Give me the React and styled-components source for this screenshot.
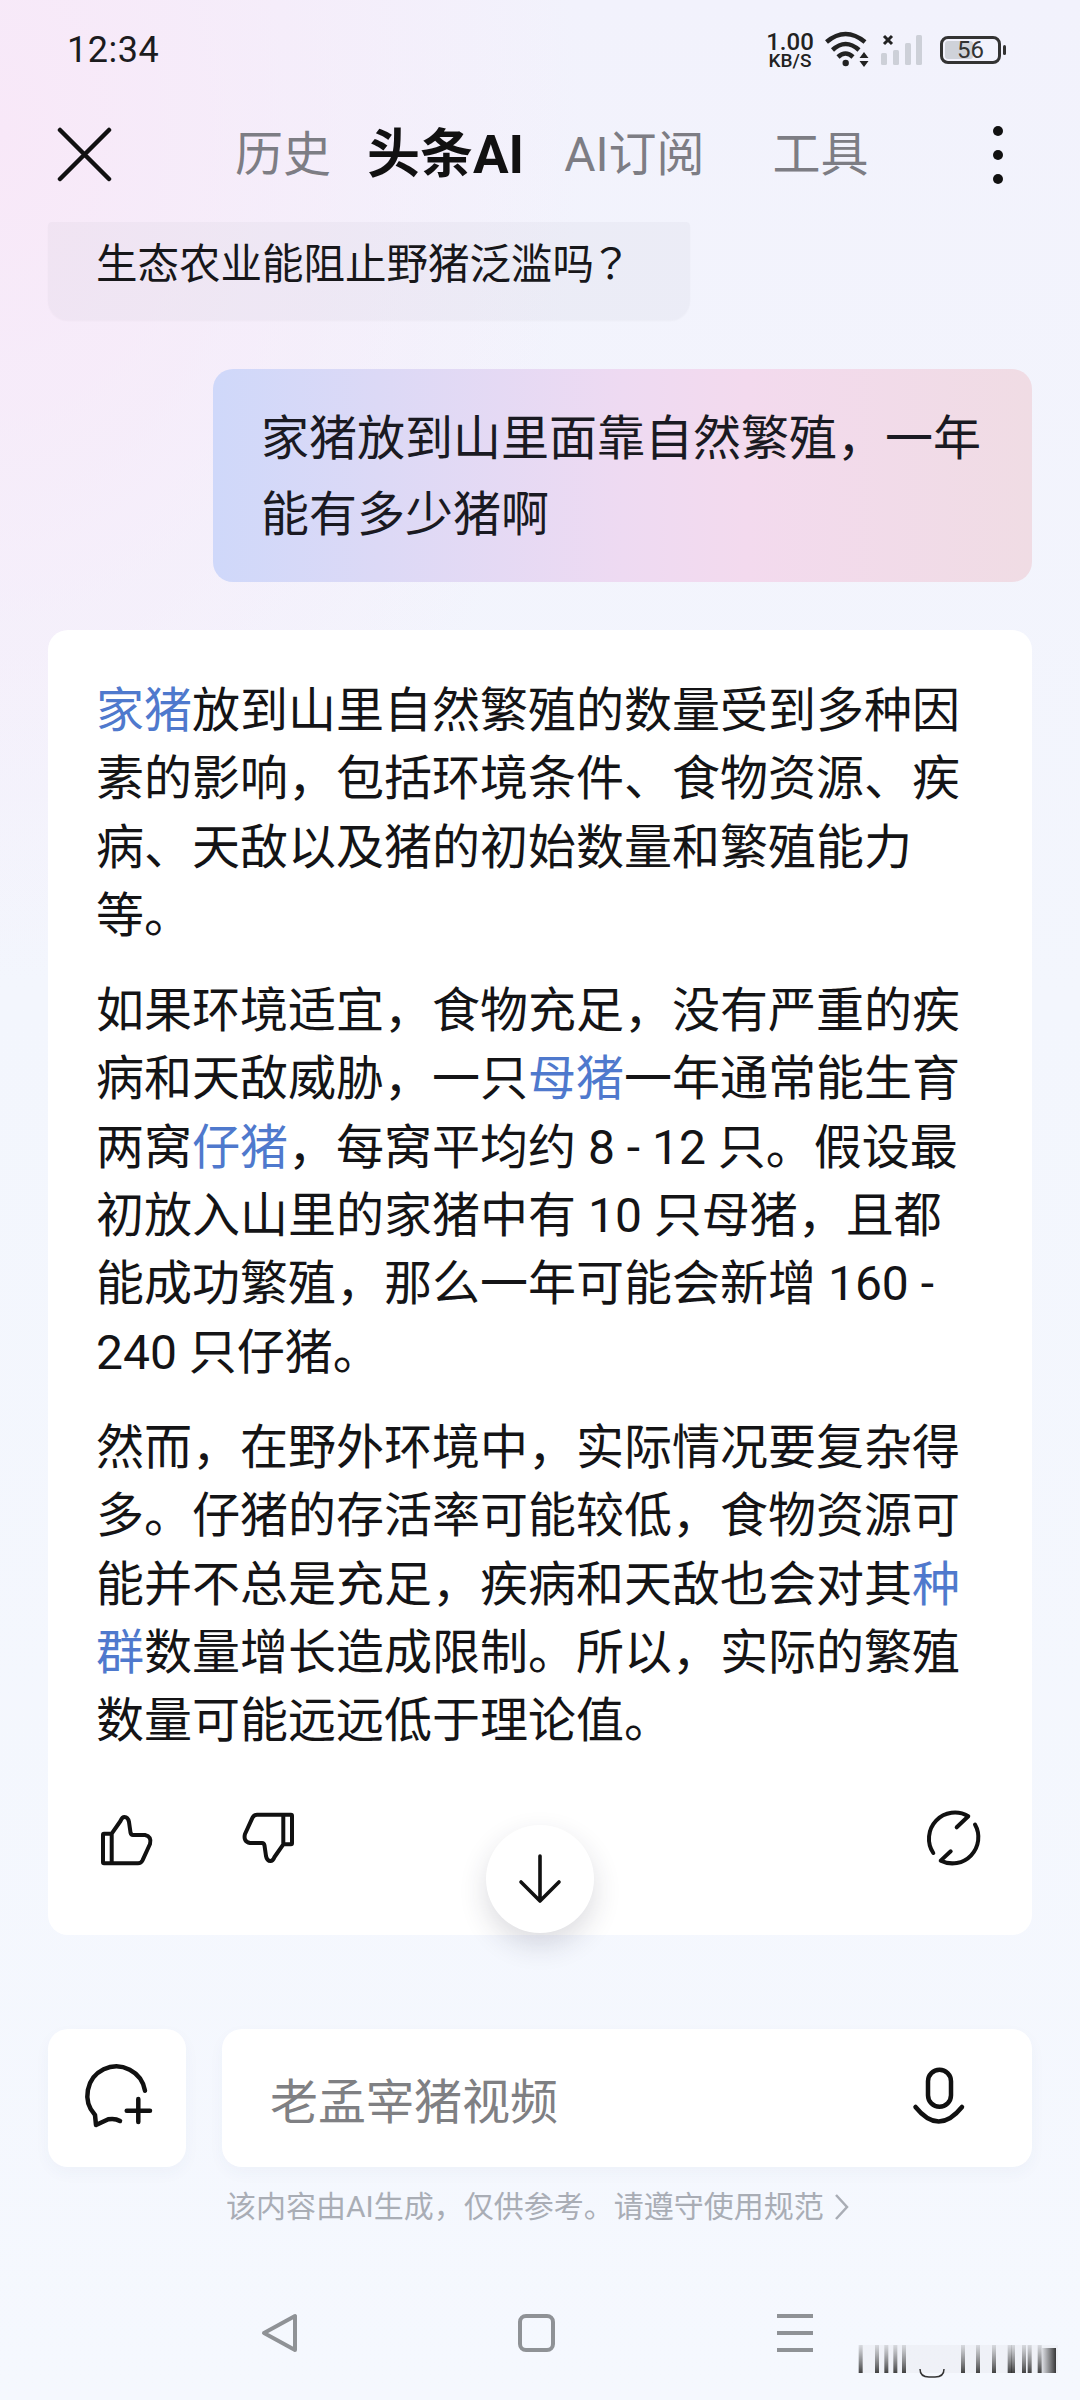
import styled, { createGlobalStyle } from "styled-components";

const GlobalStyle = createGlobalStyle`
	html, body {
		margin: 0;
		padding: 0;
		background: #f5f8fe;
	}
	* {
		box-sizing: border-box;
	}
`;

const Page = styled.div`
	position: relative;
	width: 1080px;
	height: 2400px;
	overflow: hidden;
	display: flex;
	flex-direction: column;
	font-family: Roboto, "Noto Sans CJK SC", sans-serif;
	color: #17171a;
	background: radial-gradient(ellipse 580px 850px at 0 130px, #f8e8f8 0%, rgba(248, 232, 248, 0) 100%),
		linear-gradient(180deg, #f2f2fc 0, #f3f6fd 1000px, #f5f8fe 100%);
`;

const StatusBar = styled.div`
	height: 100px;
	padding: 0 79px 0 67px;
	display: flex;
	align-items: center;
	justify-content: space-between;
`;
const Clock = styled.div`
	font-size: 36px;
	letter-spacing: 0.5px;
	color: #1c1c1e;
`;
const StatusIcons = styled.div`
	display: flex;
	align-items: center;
`;
const NetSpeed = styled.div`
	width: 48px;
	margin-right: 11px;
	display: flex;
	flex-direction: column;
	align-items: center;
	font-weight: 500;
	color: #222;
`;
const NetValue = styled.span`
	font-size: 24px;
	line-height: 20px;
`;
const NetUnit = styled.span`
	font-size: 19px;
	line-height: 17px;
`;
const Battery = styled.div`
	position: relative;
	width: 61px;
	height: 28px;
	margin-left: 11px;
	border: 3px solid #333;
	border-radius: 8px;
	display: flex;
	align-items: center;
	justify-content: center;
	font-size: 24px;
	color: #333;

	&::after {
		content: "";
		position: absolute;
		right: -8px;
		top: 6px;
		width: 3px;
		height: 10px;
		background: #333;
		border-radius: 2px;
	}
`;
const BatteryFill = styled.div`
	position: absolute;
	left: 2px;
	top: 2px;
	bottom: 2px;
	width: ${(p) => p.$level * 0.5}px;
	background: #cfd2d9;
	border-radius: 3px;
`;
const BatteryText = styled.span`
	position: relative;
`;

const Header = styled.div`
	height: 110px;
	padding-left: 56px;
	display: flex;
	align-items: center;
	margin-bottom: 12px;
`;
const Tab = styled.div`
	margin-left: ${(p) => p.$gap}px;
	font-size: ${(p) => (p.$active ? 53 : 48)}px;
	line-height: 60px;
	font-weight: ${(p) => (p.$active ? 700 : 400)};
	color: ${(p) => (p.$active ? "#111" : "#7d7d84")};
	white-space: nowrap;
`;
const MoreDots = styled.div`
	margin-left: 124px;
	display: flex;
	flex-direction: column;
	gap: 14px;
`;
const Dot = styled.span`
	width: 10px;
	height: 10px;
	border-radius: 50%;
	background: #111;
`;

const Chat = styled.div`
	padding: 0 48px;
	display: flex;
	flex-direction: column;
`;
const HistoryChip = styled.div`
	width: 642px;
	height: 98px;
	padding: 0 0 20px 48px;
	display: flex;
	align-items: center;
	font-size: 41.5px;
	border-radius: 4px 4px 20px 20px;
	background: rgba(120, 120, 140, 0.055);
	box-shadow: 0 1px 2px rgba(0, 0, 0, 0.03);
`;
const QuestionMark = styled.span`
	margin-left: -4px;
	font-family: "Noto Sans CJK JP", sans-serif;
`;
const UserBubble = styled.div`
	align-self: flex-end;
	width: 819px;
	height: 213px;
	margin-top: 49px;
	padding: 32px 40px 0 48px;
	font-size: 48px;
	line-height: 76px;
	color: #1a1a22;
	border-radius: 20px;
	background: linear-gradient(90deg, #cfd8fa 0%, #dcd9f6 20%, #eedaf2 50%, #f3daee 65%, #f0dce4 100%);
`;
const AnswerCard = styled.div`
	position: relative;
	margin-top: 48px;
	padding: 47px 50px 66px 48px;
	background: #fff;
	border-radius: 20px;
`;
const Paragraph = styled.p`
	margin: 0 0 27px;
	font-size: 48px;
	line-height: 68.3px;
	color: #141416;
`;
const KeyWord = styled.span`
	color: #4f79cd;
`;
const ActionRow = styled.div`
	margin: 54px -2px 0 2px;
	display: flex;
	align-items: center;
`;
const ActionSpacer = styled.div`
	flex: 1;
`;
const ThumbIcon = styled.svg`
	width: 56px;
	height: 56px;
	margin-right: 87px;
	fill: none;
	stroke: #111;
	stroke-width: 4;
	stroke-linejoin: round;
	stroke-linecap: round;
	transform: ${(p) => (p.$down ? "rotate(180deg)" : "none")};
`;
const ScrollButton = styled.div`
	position: absolute;
	left: 438px;
	bottom: 2px;
	width: 108px;
	height: 108px;
	border-radius: 50%;
	background: #fff;
	display: flex;
	align-items: center;
	justify-content: center;
	box-shadow: 0 12px 28px rgba(40, 40, 60, 0.16);
`;

const InputRow = styled.div`
	margin-top: 94px;
	padding: 0 48px;
	display: flex;
	gap: 36px;
`;
const NewChatButton = styled.div`
	width: 138px;
	height: 138px;
	flex: none;
	background: #fff;
	border-radius: 20px;
	display: flex;
	align-items: center;
	justify-content: center;
	box-shadow: 0 6px 16px rgba(60, 80, 130, 0.04);
`;
const InputBox = styled.div`
	flex: 1;
	height: 138px;
	padding: 0 42px 0 48px;
	background: #fff;
	border-radius: 20px;
	display: flex;
	align-items: center;
	justify-content: space-between;
	box-shadow: 0 6px 16px rgba(60, 80, 130, 0.04);
`;
const Placeholder = styled.span`
	font-size: 48px;
	color: #7f8083;
`;
const Disclaimer = styled.div`
	margin-top: 19px;
	padding-left: 226px;
	display: flex;
	align-items: center;
	gap: 10px;
	font-size: 30px;
	line-height: 42px;
	color: #a9adb5;
`;
const NavBar = styled.div`
	margin-top: 85px;
	padding-left: 260px;
	display: flex;
	align-items: center;
`;
const NavIcon = styled.svg`
	width: 40px;
	height: 40px;
	margin-right: ${(p) => p.$gap}px;
	fill: none;
	stroke: #8f9296;
	stroke-width: 4;
	stroke-linejoin: round;
`;
const Watermark = styled.svg`
	position: absolute;
	left: 852px;
	top: 2340px;
`;

const wmBars = [68, 117, 145, 172, 198, 375, 420, 468, 515, 525, 558, 575, 605];
const thumbPath =
	"M13.7 22.7H6a1 1 0 0 0 -1 1V51.3a1 1 0 0 0 1 1H40q3 0 4.5 -3L52 33q2 -7.5 -5 -9H35q-2 0 -2.5 -2.5L31 11q-1 -5 -4.5 -5Q24 6 22.5 10L13.7 22.7V52.3";

export default function App() {
	return (
		<Page>
			<GlobalStyle />
			<StatusBar>
				<Clock>12:34</Clock>
				<StatusIcons>
					<NetSpeed>
						<NetValue>1.00</NetValue>
						<NetUnit>KB/S</NetUnit>
					</NetSpeed>
					<svg width="46" height="40" viewBox="0 0 46 40" fill="none" stroke="#222" strokeWidth="4.5">
						<path d="M1.5 12Q20.5 -4 40 12" />
						<path d="M7.5 20Q20.5 8 34 20" />
						<path d="M13 27Q20.5 20 28 27" />
						<circle cx="20.7" cy="33" r="3.2" fill="#222" stroke="none" />
						<path d="M39 22l4.5 6h-9zM39 37l-4.5 -6h9z" fill="#222" stroke="none" />
					</svg>
					<svg width="48" height="34" viewBox="0 0 48 34" style={{ marginLeft: 10 }}>
						<path d="M3 3l8 8M11 3l-8 8" stroke="#222" strokeWidth="3" />
						<rect x="0" y="20" width="6" height="12" rx="1.5" fill="#cdd0d8" />
						<rect x="12" y="17" width="6" height="15" rx="1.5" fill="#cdd0d8" />
						<rect x="24" y="10" width="6" height="22" rx="1.5" fill="#cdd0d8" />
						<rect x="35" y="2" width="6" height="30" rx="1.5" fill="#cdd0d8" />
					</svg>
					<Battery>
						<BatteryFill $level={56} />
						<BatteryText>56</BatteryText>
					</Battery>
				</StatusIcons>
			</StatusBar>

			<Header>
				<svg width="56" height="56" viewBox="0 0 56 56" fill="none" stroke="#111" strokeWidth="4.5" strokeLinecap="round">
					<path d="M4 3L53 52M53 3L4 52" />
				</svg>
				<Tab $gap={123}>历史</Tab>
				<Tab $gap={36} $active>头条AI</Tab>
				<Tab $gap={40}>AI订阅</Tab>
				<Tab $gap={68}>工具</Tab>
				<MoreDots>
					<Dot />
					<Dot />
					<Dot />
				</MoreDots>
			</Header>

			<Chat>
				<HistoryChip>
					<span>
						生态农业能阻止野猪泛滥吗<QuestionMark>？</QuestionMark>
					</span>
				</HistoryChip>
				<UserBubble>家猪放到山里面靠自然繁殖，一年能有多少猪啊</UserBubble>
				<AnswerCard>
					<Paragraph>
						<KeyWord>家猪</KeyWord>放到山里自然繁殖的数量受到多种因素的影响，包括环境条件、食物资源、疾病、天敌以及猪的初始数量和繁殖能力等。
					</Paragraph>
					<Paragraph>
						如果环境适宜，食物充足，没有严重的疾病和天敌威胁，一只<KeyWord>母猪</KeyWord>一年通常能生育两窝<KeyWord>仔猪</KeyWord>，每窝平均约 8 - 12 只。假设最初放入山里的家猪中有 10 只母猪，且都能成功繁殖，那么一年可能会新增 160 - 240 只仔猪。
					</Paragraph>
					<Paragraph>
						然而，在野外环境中，实际情况要复杂得多。仔猪的存活率可能较低，食物资源可能并不总是充足，疾病和天敌也会对其<KeyWord>种群</KeyWord>数量增长造成限制。所以，实际的繁殖数量可能远远低于理论值。
					</Paragraph>
					<ActionRow>
						<ThumbIcon viewBox="0 0 56 56">
							<path d={thumbPath} />
						</ThumbIcon>
						<ThumbIcon $down viewBox="0 0 56 56">
							<path d={thumbPath} />
						</ThumbIcon>
						<ActionSpacer />
						<svg width="60" height="60" viewBox="0 0 60 60" fill="none" stroke="#111" strokeWidth="4" strokeLinecap="round" strokeLinejoin="round">
							<path d="M9.3 44A26 26 0 0 1 44.3 7.3L32.7 18.3" />
							<path d="M51 15.6A26 26 0 0 1 16.7 51.6L26.7 42.3" />
						</svg>
					</ActionRow>
					<ScrollButton>
						<svg width="44" height="52" viewBox="0 0 44 52" fill="none" stroke="#111" strokeWidth="3.6" strokeLinecap="round" strokeLinejoin="round">
							<path d="M22 3V48M3 29L22 48L41 29" />
						</svg>
					</ScrollButton>
				</AnswerCard>
			</Chat>

			<InputRow>
				<NewChatButton>
					<svg width="80" height="80" viewBox="-3 -2 80 80" fill="none" stroke="#111" strokeWidth="4.5" strokeLinecap="round" strokeLinejoin="round">
						<path d="M65 30.7A29 29 0 1 0 15 55L16 65L28.3 59.3Q35 58 40 61" />
						<path d="M46.7 50.7H70M58.3 39V62" />
					</svg>
				</NewChatButton>
				<InputBox>
					<Placeholder>老孟宰猪视频</Placeholder>
					<svg width="100" height="100" viewBox="0 2 100 100" fill="none" stroke="#111" strokeWidth="4.5" strokeLinecap="round">
						<rect x="38" y="23.7" width="23" height="37" rx="11.5" />
						<path d="M25.5 61Q48.7 90 72 61" />
					</svg>
				</InputBox>
			</InputRow>
			<Disclaimer>
				该内容由AI生成，仅供参考。请遵守使用规范
				<svg width="16" height="28" viewBox="0 0 16 28" fill="none" stroke="#a9adb5" strokeWidth="2.5">
					<path d="M2 2L13 14L2 26" />
				</svg>
			</Disclaimer>
			<NavBar>
				<NavIcon $gap={217} viewBox="0 0 40 40">
					<path d="M35 3V37L4 20Z" />
				</NavIcon>
				<NavIcon $gap={218} viewBox="0 0 40 40">
					<rect x="3" y="3" width="33" height="34" rx="6" />
				</NavIcon>
				<NavIcon $gap={0} viewBox="0 0 40 40">
					<path d="M2 3H38M2 20H38M2 37H38" />
				</NavIcon>
			</NavBar>

			<Watermark width="210" height="40" viewBox="0 0 210 40">
				<defs>
					<linearGradient id="wmBar" x1="0" y1="0" x2="0" y2="1">
						<stop offset="0" stopColor="#555" stopOpacity="0.15" />
						<stop offset="1" stopColor="#222" stopOpacity="0.85" />
					</linearGradient>
					<linearGradient id="wmEnd" x1="0" y1="0" x2="1" y2="0">
						<stop offset="0" stopColor="#333" stopOpacity="0.1" />
						<stop offset="1" stopColor="#222" stopOpacity="0.9" />
					</linearGradient>
				</defs>
				<rect x="8" y="5" width="198" height="28" fill="#d8d9dc" opacity="0.2" />
				{wmBars.map((x) => (
					<rect key={x} x={x / 3 - 16} y="5" width="4" height="28" fill="url(#wmBar)" />
				))}
				<path d="M68 29Q68 37 77 37H83Q92 37 92 29" fill="none" stroke="#333" strokeWidth="1.5" />
				<rect x="190" y="8" width="14" height="25" fill="url(#wmEnd)" />
			</Watermark>
		</Page>
	);
}
